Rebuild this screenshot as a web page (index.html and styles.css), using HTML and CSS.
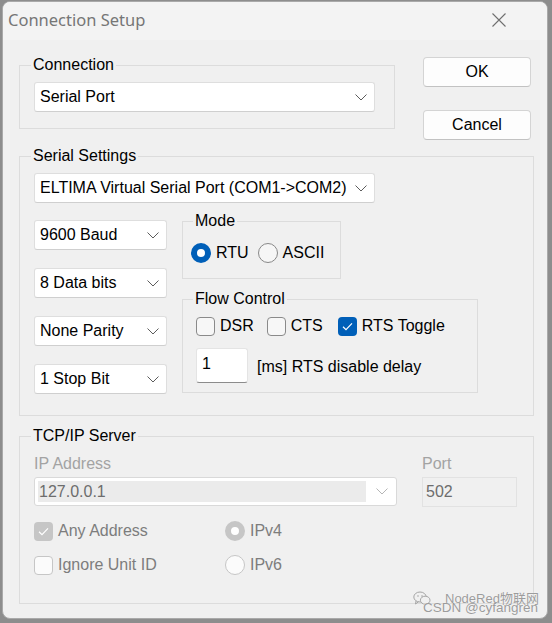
FILE: index.html
```html
<!DOCTYPE html>
<html lang="en">
<head>
<meta charset="utf-8">
<title>Connection Setup</title>
<link rel="stylesheet" href="styles.css">
</head>
<body>
<div class="dialog">
  <div class="titlebar">
    <span class="title">Connection Setup</span>
    <svg class="close" width="14" height="14" viewBox="0 0 14 14"><path d="M0.5 0.5 L13.5 13.5 M13.5 0.5 L0.5 13.5" stroke="#6f6f6f" stroke-width="1.1" fill="none"/></svg>
  </div>
  <div class="body">
    <div class="top-row">
      <fieldset class="group group-conn">
        <legend class="lg-a">Connection</legend>
        <div class="combo w-wide"><span>Serial Port</span><svg class="chev" width="12" height="7" viewBox="0 0 12 7"><path d="M0.5 0.5 L6 6 L11.5 0.5" stroke="#5c5c5c" stroke-width="1" fill="none"/></svg></div>
      </fieldset>
      <div class="buttons">
        <div class="btn">OK</div>
        <div class="btn">Cancel</div>
      </div>
    </div>

    <fieldset class="group group-serial">
      <legend class="lg-a">Serial Settings</legend>
      <div class="combo w-wide"><span>ELTIMA Virtual Serial Port (COM1-&gt;COM2)</span><svg class="chev" width="12" height="7" viewBox="0 0 12 7"><path d="M0.5 0.5 L6 6 L11.5 0.5" stroke="#5c5c5c" stroke-width="1" fill="none"/></svg></div>
      <div class="serial-row">
        <div class="combo-col">
          <div class="combo w-small"><span>9600 Baud</span><svg class="chev" width="12" height="7" viewBox="0 0 12 7"><path d="M0.5 0.5 L6 6 L11.5 0.5" stroke="#5c5c5c" stroke-width="1" fill="none"/></svg></div>
          <div class="combo w-small"><span>8 Data bits</span><svg class="chev" width="12" height="7" viewBox="0 0 12 7"><path d="M0.5 0.5 L6 6 L11.5 0.5" stroke="#5c5c5c" stroke-width="1" fill="none"/></svg></div>
          <div class="combo w-small"><span>None Parity</span><svg class="chev" width="12" height="7" viewBox="0 0 12 7"><path d="M0.5 0.5 L6 6 L11.5 0.5" stroke="#5c5c5c" stroke-width="1" fill="none"/></svg></div>
          <div class="combo w-small"><span>1 Stop Bit</span><svg class="chev" width="12" height="7" viewBox="0 0 12 7"><path d="M0.5 0.5 L6 6 L11.5 0.5" stroke="#5c5c5c" stroke-width="1" fill="none"/></svg></div>
        </div>
        <div class="right-col">
          <fieldset class="group group-mode">
            <legend class="lg-b">Mode</legend>
            <div class="opt-row">
              <div class="opt"><span class="radio radio-on"></span><span>RTU</span></div>
              <div class="opt opt-ascii"><span class="radio"></span><span>ASCII</span></div>
            </div>
          </fieldset>
          <fieldset class="group group-flow">
            <legend class="lg-a">Flow Control</legend>
            <div class="opt-row">
              <div class="opt"><span class="check"></span><span>DSR</span></div>
              <div class="opt opt-cts"><span class="check"></span><span>CTS</span></div>
              <div class="opt opt-rts"><span class="check check-on"><svg width="19" height="19" viewBox="0 0 19 19"><path d="M5 9.8 L8 12.6 L14 6.4" stroke="#fff" stroke-width="1.2" fill="none"/></svg></span><span>RTS Toggle</span></div>
            </div>
            <div class="delay-row">
              <div class="textbox">1</div>
              <span class="delay-label">[ms] RTS disable delay</span>
            </div>
          </fieldset>
        </div>
      </div>
    </fieldset>

    <fieldset class="group group-tcp">
      <legend class="lg-a">TCP/IP Server</legend>
      <div class="tcp-grid">
        <span class="dim-label">IP Address</span>
        <span class="dim-label">Port</span>
        <div class="combo combo-disabled"><span class="combo-fill">127.0.0.1</span><svg class="chev" width="12" height="7" viewBox="0 0 12 7"><path d="M0.5 0.5 L6 6 L11.5 0.5" stroke="#b5b5b5" stroke-width="1" fill="none"/></svg></div>
        <div class="portbox">502</div>
      </div>
      <div class="tcp-opts">
        <div class="opt dim"><span class="check check-dis-on"><svg width="19" height="19" viewBox="0 0 19 19"><path d="M5 9.8 L8 12.6 L14 6.4" stroke="#fff" stroke-width="1.2" fill="none"/></svg></span><span>Any Address</span></div>
        <div class="opt dim"><span class="radio radio-dis-on"></span><span>IPv4</span></div>
        <div class="opt dim"><span class="check check-dis"></span><span>Ignore Unit ID</span></div>
        <div class="opt dim"><span class="radio radio-dis"></span><span>IPv6</span></div>
      </div>
    </fieldset>
  </div>

  <div class="watermark">
    <div class="wm-top">
      <svg class="wechat" width="18" height="15" viewBox="0 0 18 15"><ellipse cx="7" cy="6" rx="6.2" ry="5" fill="none" stroke="#a5a5a5" stroke-width="1"/><path d="M3 10 L2.5 13 L5.5 10.8" fill="none" stroke="#a5a5a5" stroke-width="1"/><ellipse cx="12.2" cy="9.2" rx="4.8" ry="4" fill="#f0f0f0" stroke="#a5a5a5" stroke-width="1"/><circle cx="5" cy="5" r="0.8" fill="#a5a5a5"/><circle cx="9" cy="5" r="0.8" fill="#a5a5a5"/></svg>
      <span>NodeRed物联网</span>
    </div>
    <div class="wm-bottom">CSDN @cyfangren</div>
  </div>
</div>
</body>
</html>
```
FILE: styles.css
```css
* { box-sizing: border-box; }

html, body {
  margin: 0;
  padding: 0;
}

body {
  width: 552px;
  height: 623px;
  overflow: hidden;
  background: #8d8d8d;
  font-family: "Liberation Sans", Arial, sans-serif;
  font-size: 16px;
  line-height: 18px;
  color: #000;
}

.dialog {
  position: relative;
  margin: 1px 0 0 2px;
  width: 546px;
  height: 618px;
  background: #f0f0f0;
  border: 1px solid #a9a9a9;
  border-radius: 8px;
  overflow: hidden;
}

.titlebar {
  height: 38px;
  background: #f3f3f3;
  display: flex;
  justify-content: space-between;
  align-items: flex-start;
  padding: 7px 41px 0 5px;
}

.title {
  font-family: "Noto Sans", "Open Sans", sans-serif;
  font-size: 16.5px;
  line-height: 22px;
  color: #767676;
}

.close {
  margin-top: 4px;
  display: block;
}

.body {
  padding: 16px 0 0 16px;
}

.top-row {
  display: flex;
  align-items: flex-start;
}

/* group boxes */
.group {
  margin: 0;
  border: 1px solid #dcdcdc;
  min-width: 0;
}

.group legend {
  padding: 0 2px;
  line-height: 18px;
  height: 18px;
}

.lg-a { margin-left: -3px; }
.lg-b { margin-left: 2px; }

.group-conn {
  width: 376px;
  padding: 8px 19px 16px 14px;
}

.buttons {
  margin-left: 28px;
  margin-top: 1px;
  display: flex;
  flex-direction: column;
  gap: 23px;
}

.btn {
  width: 108px;
  height: 30px;
  background: #fdfdfd;
  border: 1px solid #d4d4d4;
  border-bottom-color: #c2c2c2;
  border-radius: 4px;
  display: flex;
  align-items: center;
  justify-content: center;
}

/* combos */
.combo {
  height: 30px;
  background: #fff;
  border: 1px solid #dedede;
  border-bottom-color: #cfcfcf;
  border-radius: 3px;
  display: flex;
  align-items: center;
  justify-content: space-between;
  padding: 0 7px 0 5px;
}

.chev { display: block; flex: none; }

.w-wide { width: 341px; }
.w-small { width: 133px; }

.group-serial {
  margin-top: 7px;
  width: 515px;
  padding: 8px 20px 21px 14px;
}

.serial-row {
  margin-top: 9px;
  display: flex;
  align-items: flex-start;
}

.combo-col {
  padding-top: 8px;
  display: flex;
  flex-direction: column;
  gap: 18px;
}

.right-col {
  margin-left: 15px;
  display: flex;
  flex-direction: column;
}

.group-mode {
  width: 159px;
  padding: 13px 8px 15px 8px;
}

.group-flow {
  margin-top: 11px;
  width: 296px;
  padding: 8px 8px 9px 13px;
}

.opt-row {
  display: flex;
  align-items: center;
  height: 20px;
}

.opt {
  display: flex;
  align-items: center;
  gap: 5px;
  height: 20px;
}

.opt-ascii { margin-left: 9px; }
.opt-cts { margin-left: 13px; }
.opt-rts { margin-left: 15px; }

.radio {
  width: 20px;
  height: 20px;
  border-radius: 50%;
  border: 1px solid #888;
  background: #f6f6f6;
  flex: none;
}

.radio-on {
  border: 6px solid #005fb8;
  background: #fff;
}

.check {
  width: 19px;
  height: 19px;
  border-radius: 4px;
  border: 1px solid #8a8a8a;
  background: #f7f7f7;
  flex: none;
}

.check svg { display: block; }

.check-on {
  border: none;
  background: #005fb8;
}

.delay-row {
  margin-top: 12px;
  display: flex;
  align-items: center;
}

.textbox {
  width: 52px;
  height: 35px;
  background: #fff;
  border: 1px solid #e4e4e4;
  border-bottom: 1px solid #8c8c8c;
  border-radius: 3px;
  padding: 6px 0 0 5px;
}

.delay-label {
  margin-left: 9px;
  padding-top: 3px;
}

/* TCP/IP */
.group-tcp {
  margin-top: 11px;
  width: 515px;
  padding: 10px 14px 28px 14px;
}

.tcp-grid {
  display: grid;
  grid-template-columns: 363px 95px;
  column-gap: 25px;
  row-gap: 4px;
  align-items: start;
}

.dim-label { color: #a3a3a3; }

.combo-disabled {
  height: 29px;
  padding: 3px 4px 3px 3px;
  border-color: #d9d9d9;
  align-items: stretch;
}

.combo-fill {
  width: 328px;
  background: #ebebeb;
  color: #6d6d6d;
  display: flex;
  align-items: center;
  padding-left: 1px;
}

.combo-disabled .chev {
  align-self: center;
  margin-right: 4px;
}

.portbox {
  height: 30px;
  border: 1px solid #e2e2e2;
  background: #f0f0f0;
  color: #6d6d6d;
  display: flex;
  align-items: center;
  padding-left: 3px;
}

.tcp-opts {
  margin-top: 14px;
  display: grid;
  grid-template-columns: 191px auto;
  row-gap: 14px;
}

.dim { color: #7d7d7d; }

.check-dis-on {
  border: none;
  background: #c6c6c6;
}

.check-dis {
  border-color: #c6c6c6;
  background: #fbfbfb;
}

.radio-dis-on {
  border: 6px solid #c6c6c6;
  background: #fff;
}

.radio-dis {
  border-color: #c6c6c6;
  background: #fbfbfb;
}

/* watermark overlay */
.watermark {
  position: absolute;
  right: 9px;
  bottom: 3px;
  color: #9c9c9c;
  font-size: 13px;
  line-height: 14px;
  text-shadow: 0 0 1px #fff;
}

.wm-top {
  display: flex;
  align-items: center;
  gap: 14px;
  font-family: "Liberation Sans", "Noto Sans CJK SC", sans-serif;
  margin-right: -1px;
}

.wechat { display: block; }

.wm-bottom {
  margin-top: -5px;
  margin-left: 10px;
  font-family: "Liberation Sans", sans-serif;
  font-size: 13.5px;
}
```
